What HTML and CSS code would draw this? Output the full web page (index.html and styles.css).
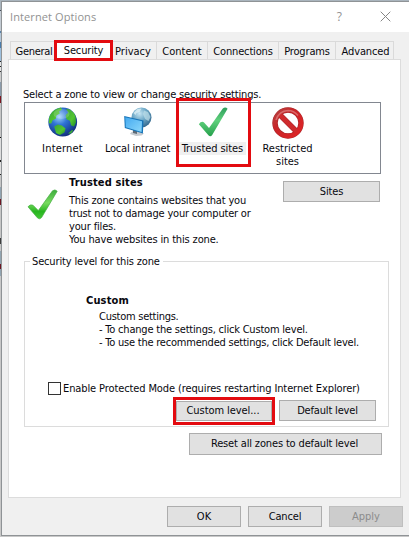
FILE: index.html
```html
<!DOCTYPE html>
<html lang="en">
<head>
<meta charset="utf-8">
<title>Internet Options</title>
<link rel="stylesheet" href="styles.css">
</head>
<body>
<main class="window">
  <header class="titlebar">
    <h1 class="title">Internet Options</h1>
    <span class="help">?</span>
    <svg class="close" width="11" height="11" viewBox="0 0 11 11"><path d="M.7.7l9.6 9.6M10.3.7L.7 10.3" stroke="#858585" fill="none"/></svg>
  </header>

  <nav class="tabs">
    <span class="tab tab-general t30">General</span>
    <span class="tab tab-security t15">Security</span>
    <span class="tab tab-privacy">Privacy</span>
    <span class="tab tab-content">Content</span>
    <span class="tab tab-connections t15">Connections</span>
    <span class="tab tab-programs t15">Programs</span>
    <span class="tab tab-advanced t10">Advanced</span>
  </nav>

  <section class="panel">
    <p class="prompt t17">Select a zone to view or change security settings.</p>
    <div class="zones">
      <div class="zone zone-internet">
        <svg width="30" height="30" viewBox="0 0 30 30">
          <defs>
            <radialGradient id="sea" cx=".38" cy=".32" r=".7"><stop offset="0" stop-color="#9fd4f8"/><stop offset=".4" stop-color="#2f74d6"/><stop offset="1" stop-color="#12307f"/></radialGradient>
            <linearGradient id="land" x1="0" y1="0" x2="1" y2="1"><stop offset="0" stop-color="#3aa33c"/><stop offset=".6" stop-color="#52c530"/><stop offset="1" stop-color="#1f8a2a"/></linearGradient>
          </defs>
          <circle cx="14.7" cy="15" r="14.4" fill="url(#sea)"/>
          <path d="M1 11Q3 4 9 1.8l4-1.2 1 2.2-3 1.6.8 2-3.4 2.2-.6 3.2-3.2 1.4-1.4 3.4-2.4-.4z" fill="url(#land)"/>
          <path d="M18 2l4 .6q4 2.600 5.600 7l.4 6-2 4-3-1.400-1-4.400-3.600-1.600-.8-4 2.600-2.800z" fill="url(#land)"/>
          <path d="M6.200 19.600l3.600-2 4 .8 3.800 3-1.200 4-4.400 2.600-4-2z" fill="url(#land)"/>
          <path d="M20 26.600l4-3.600 1.200.4-2.200 3z" fill="#3cae35"/>
          <ellipse cx="13.500" cy="7" rx="8" ry="5" fill="#fff" opacity=".18"/>
        </svg>
        <span class="zone-name p20">Internet</span>
      </div>
      <div class="zone zone-intranet">
        <svg width="30" height="30" viewBox="0 0 30 30">
          <defs>
            <radialGradient id="globe" cx=".4" cy=".3" r=".7"><stop offset="0" stop-color="#c7e6f3"/><stop offset=".5" stop-color="#6fa9c8"/><stop offset="1" stop-color="#376c91"/></radialGradient>
            <linearGradient id="screen" x1="0" y1="0" x2="1" y2="1"><stop offset="0" stop-color="#45aaf0"/><stop offset="1" stop-color="#8bd8fb"/></linearGradient>
          </defs>
          <circle cx="18.500" cy="10.500" r="10" fill="url(#globe)"/>
          <path d="M10.500 6l4-4 4-.4-2 3.400-3 1-1 2z" fill="#e0f2f7" opacity=".75"/>
          <path d="M21 3.500l4 1.500 2.500 5-2 4-3.500-2-2-5z" fill="#c0dfea" opacity=".7"/>
          <path d="M8 25.500l3.500-2 9.500 3-2.500 2-5.500.5-6-2z" fill="#c6cbd0"/>
          <path d="M10 22l4 1v4l-4-1z" fill="#5d6a75"/>
          <path d="M1.200 9l19.300 4.500-.6 13L1.800 21z" fill="#1674b8"/>
          <path d="M2.200 10.300l16.800 4-.4 10.700L2.800 20.200z" fill="url(#screen)"/>
        </svg>
        <span class="zone-name t20">Local intranet</span>
      </div>
      <div class="zone zone-trusted">
        <svg width="30" height="30" viewBox="0 0 30 30">
          <defs><linearGradient id="tick" x1="0" y1="0" x2="0" y2="1"><stop offset="0" stop-color="#2f9e5c"/><stop offset=".45" stop-color="#5fd07c"/><stop offset="1" stop-color="#25a04c"/></linearGradient></defs>
          <path d="M.9 17.200Q3 14 5.800 15.200L11 21 24.800 1.400Q27.500-.4 29.600 1.800L14.200 28Q12.500 30.400 10.400 28.300z" fill="url(#tick)"/>
        </svg>
        <span class="zone-name selected t8">Trusted sites</span>
      </div>
      <div class="zone zone-restricted">
        <svg width="32" height="32" viewBox="0 0 32 32">
          <defs><linearGradient id="ban" x1="0" y1="0" x2="1" y2="1"><stop offset="0" stop-color="#b64242"/><stop offset=".35" stop-color="#c92528"/><stop offset="1" stop-color="#df2426"/></linearGradient></defs>
          <circle cx="16" cy="16" r="13" fill="#fff" stroke="#a82528" stroke-width="5.400"/>
          <path d="M7.500 7.500l17 17" stroke="#b02427" stroke-width="5.400"/>
          <circle cx="16" cy="16" r="13" fill="none" stroke="url(#ban)" stroke-width="4.400"/>
          <path d="M7.500 7.500l17 17" stroke="#cf2b2d" stroke-width="4.400"/>
          <path d="M4 13Q7 4 16 3.500q6 0 10 5" fill="none" stroke="#e58b89" stroke-width="1.500" opacity=".65"/>
        </svg>
        <span class="zone-name">Restricted<br>sites</span>
      </div>
      <span class="mark mark-trusted"></span>
    </div>

    <div class="details">
      <svg class="check" width="31" height="31" viewBox="0 0 31 31">
        <defs><linearGradient id="tick2" x1="0" y1="0" x2="0" y2="1"><stop offset="0" stop-color="#3cab3c"/><stop offset=".45" stop-color="#79dc60"/><stop offset=".75" stop-color="#27b51f"/><stop offset="1" stop-color="#43c935"/></linearGradient></defs>
        <path d="M1 17.800Q3 15 6 16.200L11.300 21.600 25.500 1.800Q28-.2 30.200 2.200L14.600 28.500Q12.500 31 10.300 28.700z" fill="url(#tick2)" stroke="#46ad42" stroke-width=".7"/>
      </svg>
      <div class="about">
        <h2 class="p15">Trusted sites</h2>
        <p><span class="t17">This zone contains websites that you</span><br><span class="t20">trust not to damage your computer or</span><br><span class="t15">your files.</span><br><span class="t15">You have websites in this zone.</span></p>
      </div>
      <button class="btn btn-sites t15">Sites</button>
    </div>

    <fieldset class="level">
      <legend class="t16">Security level for this zone</legend>
      <h2 class="p15">Custom</h2>
      <p class="level-text"><span class="t26">Custom settings.</span><br><span class="t20">- To change the settings, click Custom level.</span><br><span class="t22">- To use the recommended settings, click Default level.</span></p>
      <label class="protect t11"><span class="box"></span>Enable Protected Mode (requires restarting Internet Explorer)</label>
      <div class="level-buttons">
        <div class="marked"><button class="btn btn-custom t7">Custom level...</button></div>
        <button class="btn btn-default t17">Default level</button>
      </div>
    </fieldset>
    <button class="btn btn-reset t15">Reset all zones to default level</button>
  </section>

  <footer class="actions">
    <button class="btn">OK</button>
    <button class="btn t15">Cancel</button>
    <button class="btn" disabled>Apply</button>
  </footer>
</main>
</body>
</html>
```
FILE: styles.css
```css
* { box-sizing: border-box; }

body {
  margin: 0;
  padding: 1px 0 0 1px;
  height: 537px;
  overflow: hidden;
  font: 11px/13px "DejaVu Sans Condensed", "DejaVu Sans", sans-serif;
  color: #08080e;
  /* slivers of the page behind the dialog */
  background: linear-gradient(#a9b4bd 0 10px, #444c58 10px 11px, #c3cbd3 11px 31px, #5a82a8 31px 33px, #b4c7d9 33px 42px, #4a7cac 42px 48px, #9dbfdd 48px 61px, #222 61px 62px, #e4e4e4 62px 66px, #222 66px 67px, #e4e4e4 67px 71px, #333 71px 72px, #ccc 72px 82px, #8b9bab 82px 96px, #7c1620 96px 103px, #c6c6c6 103px 137px, #111 137px 138px, #ddd 138px 160px, #222 160px 162px, #ddd 162px 174px, #222 174px 175px, #c6c6c6 175px 187px, #91a4b1 187px 199px, #6d1521 199px 205px, #c6c6c6 205px 238px, #3c3c3c 238px 244px, #c6c6c6 244px 251px, #91a4b1 251px 264px, #6d1521 264px 269px, #91a4b1 269px 276px, #c8c8c8 276px);
}

h1, h2, p { margin: 0; font-size: inherit; }

.window {
  width: 408px;
  height: 535px;
  border: 1px solid #8f9396;
  border-right: 0;
  background: #f0f0f0;
}

.titlebar {
  display: flex;
  align-items: center;
  height: 30px;
  padding: 0 18px 2px 8px;
  background: #fff;
  color: #929292;
  font-family: "Open Sans", sans-serif;
}
.title { flex: 1; font-size: 11px; font-weight: 400; letter-spacing: .1px; }
.help { margin-right: 38px; font-size: 12px; }

.tabs {
  display: flex;
  align-items: flex-end;
  height: 27px;
  padding-left: 8px;
}
.tab {
  height: 18px;
  padding-top: 3px;
  border-top: 1px solid #dadada;
  border-right: 1px solid #dadada;
  text-align: center;
  white-space: nowrap;
}
.tab-general { width: 46px; border-left: 1px solid #dadada; padding-left: 2px; }
.tab-security {
  position: relative;
  z-index: 1;
  width: 59px;
  height: 21px;
  margin: 0 -1px -2px -2px;
  border: 3px solid #e30b10;
  background: #fff;
  line-height: 9px;
}
.tab-privacy { width: 45px; padding-right: 2px; }
.tab-content { width: 51px; }
.tab-connections { width: 71px; }
.tab-programs { width: 57px; }
.tab-advanced { width: 58px; padding-left: 2px; }

.panel {
  display: flow-root;
  width: 393px;
  height: 439px;
  margin-left: 6px;
  padding: 28px 0 0 15px;
  border: 1px solid #dcdcdc;
  background: #fff;
}
.prompt { height: 14px; margin-left: -1px; white-space: nowrap; }

.zones {
  position: relative;
  display: flex;
  width: 357px;
  height: 72px;
  padding-top: 4px;
  border: 1px solid #828790;
}
.zone {
  display: flex;
  flex-direction: column;
  align-items: center;
  width: 75px;
  text-align: center;
  white-space: nowrap;
}
.zone svg { flex: none; }
.zone-name { margin-top: 5px; }
.zone-restricted .zone-name { margin-top: 3px; }
.selected { padding: 0 3px; background: #f0f0f0; }
.mark {
  position: absolute;
  left: 151px;
  top: -5px;
  width: 75px;
  height: 69px;
  border: 3px solid #e30b10;
}

.details { display: flex; height: 81px; padding-top: 2px; white-space: nowrap; }
.check { margin: 13px 11px 0 3px; }
.about { width: 214px; }
.about h2 { margin-bottom: 5px; }

.btn {
  width: 74px;
  height: 22px;
  padding: 0 0 1px;
  border: 1px solid #adadad;
  background: #e1e1e1;
  color: #08080e;
  font: inherit;
  white-space: nowrap;
}
.btn:disabled { border-color: #bfbfbf; background: #ccc; color: #8b8b8b; }
.btn-sites { width: 97px; height: 21px; margin-top: 5px; }

.level {
  width: 365px;
  height: 172px;
  margin: 0;
  padding: 26px 0 0;
  border: 1px solid #dcdcdc;
  white-space: nowrap;
}
.level legend { margin-left: 5px; padding: 0 3px 0 2px; }
.level h2 { padding-left: 61px; }
.level-text { padding: 3px 0 0 74px; }
.protect { display: flex; align-items: center; height: 13px; margin: 33px 0 0 23px; }
.box { width: 13px; height: 13px; margin-right: 2px; border: 1px solid #333; background: #fff; }
.level-buttons { display: flex; align-items: center; margin: 2px 0 0 148px; }
.marked { display: flex; width: 102px; height: 28px; margin-right: 4px; border: 3px solid #e30b10; padding: 1px 0; }
.btn-custom { width: 96px; height: 20px; padding-right: 2px; }
.btn-default { width: 97px; height: 21px; margin-bottom: 1px; }
.btn-reset { display: block; width: 193px; margin: 6px 0 0 165px; padding-right: 2px; }

.actions { display: flex; gap: 7px; margin: 8px 0 0 165px; }
.actions .btn { height: 21px; }

/* tracking */
.t7, .t8 { letter-spacing: -.07px; }
.t10, .t11 { letter-spacing: -.11px; }
.t15, .t16 { letter-spacing: -.15px; }
.t17 { letter-spacing: -.17px; }
.t20 { letter-spacing: -.2px; }
.t22 { letter-spacing: -.22px; }
.t26 { letter-spacing: -.26px; }
.t30 { letter-spacing: -.3px; }
.p15 { letter-spacing: .15px; }
.p20 { letter-spacing: .2px; }
```
